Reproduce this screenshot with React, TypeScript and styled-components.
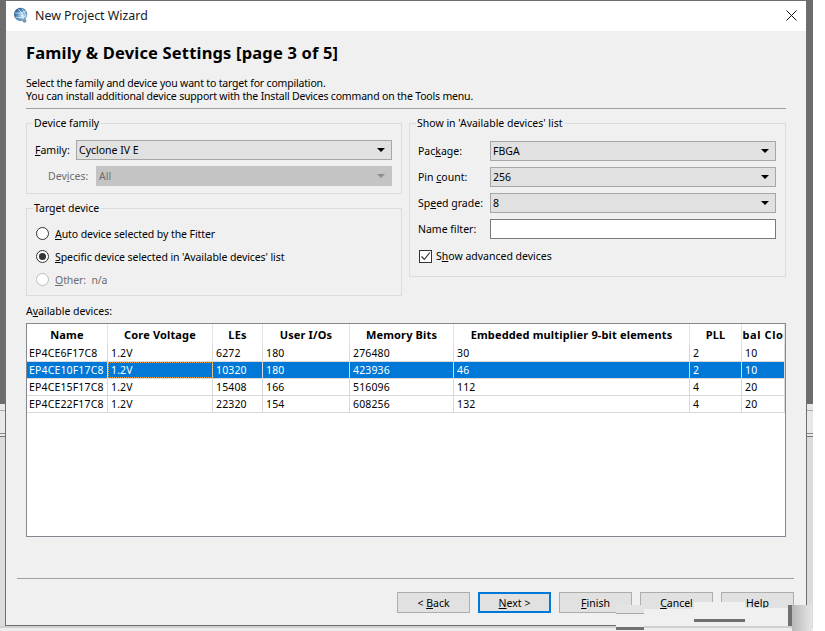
import { FC, ReactNode } from "react";
import styled, { createGlobalStyle } from "styled-components";

const UI_FONT = `"Noto Sans", "Open Sans", sans-serif`;

const GlobalStyle = createGlobalStyle`
  html, body {
    margin: 0;
    padding: 0;
    background: #fff;
  }
  body {
    font-family: ${UI_FONT};
    font-size: 11px;
    color: #000;
  }
`;

const Page = styled.div`
  position: relative;
  width: 825px;
  height: 631px;
  overflow: hidden;
  background: #fff;
`;

/* what is left of the windows behind the dialog, plus its drop shadow */
const Backdrop = styled.div`
  width: 813px;
  height: 631px;
  padding-left: 5px;
  box-sizing: border-box;
  background: linear-gradient(
    to bottom,
    #6c6c6c 0 404px,
    #e8e8e8 404px 410px,
    #a8a8a8 410px 411px,
    #e8e8e8 411px 433px,
    #8a8a8a 433px 434px,
    #e8e8e8 434px 436px,
    #777 436px 437px,
    #dcdcdc 437px 626px,
    #d0d0d0 626px 628px,
    #ededed 628px 631px
  );
`;

const Window = styled.div`
  display: flex;
  flex-direction: column;
  width: 802px;
  height: 626px;
  box-sizing: border-box;
  border: 1px solid #6f6f6f;
  background: #f0f0f0;
`;

const TitleBar = styled.div`
  display: flex;
  align-items: center;
  height: 30px;
  box-sizing: border-box;
  flex: none;
  background: #fff;
  padding: 0 9px 2px 7px;
`;

const TitleText = styled.span`
  flex: 1;
  margin-left: 6px;
  font-size: 12.4px;
  color: #1a1a1a;
`;

const Body = styled.div`
  flex: 1;
  display: flex;
  flex-direction: column;
  padding: 0 20px;
`;

const Heading = styled.h1`
  margin: 11px 0 0;
  height: 21px;
  line-height: 21px;
  font-size: 16.5px;
  letter-spacing: 0.17px;
  font-weight: 700;
`;

const Intro = styled.p`
  margin: 14px 0 0;
  line-height: 13px;
  font-size: 10.5px;
  letter-spacing: -0.18px;
`;

const Rule = styled.div`
  height: 1px;
  background: #a0a0a0;
`;

const IntroRule = styled(Rule)`
  margin-top: 5px;
`;

const Groups = styled.div`
  display: grid;
  grid-template-columns: 376px 377px;
  column-gap: 7px;
  align-items: start;
  margin-top: 14px;
`;

const Column = styled.div`
  display: flex;
  flex-direction: column;
  gap: 14px;
`;

const GroupBox = styled.section<{ $height: number; $pad: number }>`
  position: relative;
  box-sizing: border-box;
  height: ${(p) => p.$height}px;
  border: 1px solid #dcdcdc;
  padding: ${(p) => p.$pad}px 9px 0 8px;
  display: flex;
  flex-direction: column;
`;

const Legend = styled.span`
  position: absolute;
  top: -8px;
  left: 6px;
  padding: 0 1px;
  line-height: 14px;
  font-size: 10.5px;
  background: #f0f0f0;
`;

const FieldRow = styled.div<{ $labelWidth: number }>`
  display: grid;
  grid-template-columns: ${(p) => p.$labelWidth}px 1fr;
  align-items: center;
  height: 20px;
  margin-bottom: 6px;
`;

const FieldLabel = styled.span<{ $disabled?: boolean; $indent?: number }>`
  font-size: 10.5px;
  padding-left: ${(p) => p.$indent ?? 0}px;
  color: ${(p) => (p.$disabled ? "#6d6d6d" : "#000")};
`;

const ComboBox = styled.div<{ $disabled?: boolean }>`
  display: flex;
  align-items: center;
  justify-content: space-between;
  height: 20px;
  box-sizing: border-box;
  padding: 0 5px 0 2px;
  font-size: 10.5px;
  border: 1px solid ${(p) => (p.$disabled ? "#c4c4c4" : "#a6a6a6")};
  background: ${(p) => (p.$disabled ? "#c4c4c4" : "#e1e1e1")};
  color: ${(p) => (p.$disabled ? "#6d6d6d" : "#000")};
`;

const Arrow = styled.span<{ $disabled?: boolean }>`
  width: 0;
  height: 0;
  margin-right: 1px;
  border-left: 4px solid transparent;
  border-right: 4px solid transparent;
  border-top: 4px solid ${(p) => (p.$disabled ? "#8d8d8d" : "#000")};
`;

const TextBox = styled.div`
  height: 20px;
  box-sizing: border-box;
  border: 1px solid #7a7a7a;
  background: #fff;
`;

const RadioRow = styled.div<{ $disabled?: boolean }>`
  display: flex;
  align-items: center;
  gap: 6px;
  height: 13px;
  margin-bottom: 10px;
  margin-left: 1px;
  font-size: 10.5px;
  letter-spacing: -0.08px;
  color: ${(p) => (p.$disabled ? "#6d6d6d" : "#000")};
`;

const RadioDot = styled.span<{ $checked?: boolean; $disabled?: boolean }>`
  display: flex;
  align-items: center;
  justify-content: center;
  width: 13px;
  height: 13px;
  box-sizing: border-box;
  border-radius: 50%;
  border: 1px solid ${(p) => (p.$disabled ? "#bcbcbc" : "#333")};
  background: #fff;

  &::after {
    content: "";
    display: ${(p) => (p.$checked ? "block" : "none")};
    width: 7px;
    height: 7px;
    border-radius: 50%;
    background: #333;
  }
`;

const CheckRow = styled.div`
  display: flex;
  align-items: center;
  gap: 4px;
  margin-top: 4px;
  margin-left: 1px;
  font-size: 10.5px;
`;

const CheckSquare = styled.span`
  display: flex;
  width: 13px;
  height: 13px;
  box-sizing: border-box;
  border: 1px solid #333;
  background: #fff;
`;

const SectionLabel = styled.div`
  margin-top: 8px;
  height: 19px;
  line-height: 14px;
  font-size: 10.5px;
`;

const DeviceTable = styled.div`
  height: 214px;
  box-sizing: border-box;
  border: 1px solid #828790;
  background: #fff;
  overflow: hidden;
`;

const COLUMNS = "81px 105px 50px 87px 104px 236px 52px 43px";

const HeaderRow = styled.div`
  display: grid;
  grid-template-columns: ${COLUMNS};
  height: 21px;
`;

const HeaderCell = styled.div`
  display: flex;
  align-items: center;
  justify-content: center;
  overflow: hidden;
  white-space: nowrap;
  font-size: 11px;
  letter-spacing: 0.15px;
  font-weight: 700;
  border-right: 1px solid #e4e4e4;

  &:last-child {
    letter-spacing: 0.6px;
  }
`;

const DataRow = styled.div<{ $selected?: boolean }>`
  display: grid;
  grid-template-columns: ${COLUMNS};
  height: 17px;
  box-sizing: border-box;
  border-bottom: 1px solid #d9d9d9;
  background: ${(p) => (p.$selected ? "#0078d7" : "#fff")};
  color: ${(p) => (p.$selected ? "#fff" : "#000")};
`;

const DataCell = styled.div<{ $focused?: boolean }>`
  box-sizing: border-box;
  padding-left: 3px;
  line-height: 16px;
  font-size: 10.5px;
  letter-spacing: 0.15px;
  white-space: nowrap;
  overflow: hidden;
  border-right: 1px solid #d9d9d9;
  outline: ${(p) => (p.$focused ? "1px dotted #f5a13a" : "none")};
  outline-offset: -1px;

  &:first-child {
    padding-left: 2px;
  }
`;

const Footer = styled.div`
  flex: none;
  padding: 40px 12px 0 11px;
  height: 87px;
  box-sizing: border-box;
`;

const ButtonBar = styled.div`
  display: flex;
  justify-content: flex-end;
  gap: 8px;
  margin-top: 13px;
`;

const Button = styled.div<{ $primary?: boolean }>`
  display: flex;
  align-items: center;
  justify-content: center;
  width: 73px;
  height: 21px;
  box-sizing: border-box;
  font-size: 10.5px;
  background: #e1e1e1;
  border: ${(p) => (p.$primary ? "2px solid #0078d7" : "1px solid #adadad")};
`;

/* torn patches of the capture along the bottom edge */
const Smudge = styled.div<{
  $left: number;
  $top: number;
  $width: number;
  $height: number;
  $fill?: string;
}>`
  position: absolute;
  left: ${(p) => p.$left}px;
  top: ${(p) => p.$top}px;
  width: ${(p) => p.$width}px;
  height: ${(p) => p.$height}px;
  background: ${(p) => p.$fill ?? "#f0f0f0"};
`;

const GlobeIcon: FC = () => (
  <svg width="16" height="17" viewBox="0 0 16 17">
    <defs>
      <radialGradient id="globe" cx="0.62" cy="0.6" r="0.7">
        <stop offset="0" stopColor="#dcecf6" />
        <stop offset="0.5" stopColor="#5d97c6" />
        <stop offset="1" stopColor="#1f4f86" />
      </radialGradient>
    </defs>
    <circle cx="7.6" cy="7.4" r="6.6" fill="url(#globe)" />
    <path
      d="M5 2c3 2 5 6 5.5 10M9 1.5c2 2 3.500 5 4 8M2 6c3 .5 7 0 11-2M2.500 10c3 1 7 1 10.500-1"
      stroke="#fff"
      strokeWidth="0.8"
      fill="none"
      opacity="0.75"
    />
    <circle cx="11.500" cy="13.800" r="2" fill="#7b98ad" />
  </svg>
);

const CloseIcon: FC = () => (
  <svg width="11" height="11" viewBox="0 0 11 11">
    <path d="M.5.5l10 10M10.500.5l-10 10" stroke="#111" strokeWidth="1" fill="none" />
  </svg>
);

const CheckMark: FC = () => (
  <svg width="11" height="11" viewBox="0 0 11 11">
    <path d="M1.500 5.500l2.800 3L9.800 1.500" stroke="#333" strokeWidth="1.100" fill="none" />
  </svg>
);

const Combo: FC<{ value: string; disabled?: boolean }> = ({ value, disabled }) => (
  <ComboBox $disabled={disabled}>
    {value}
    <Arrow $disabled={disabled} />
  </ComboBox>
);

const Radio: FC<{ checked?: boolean; disabled?: boolean; children: ReactNode }> = ({
  checked,
  disabled,
  children,
}) => (
  <RadioRow $disabled={disabled}>
    <RadioDot $checked={checked} $disabled={disabled} />
    <span>{children}</span>
  </RadioRow>
);

const headers = [
  "Name",
  "Core Voltage",
  "LEs",
  "User I/Os",
  "Memory Bits",
  "Embedded multiplier 9-bit elements",
  "PLL",
  "Global Clocks",
];

const devices = [
  ["EP4CE6F17C8", "1.2V", "6272", "180", "276480", "30", "2", "10"],
  ["EP4CE10F17C8", "1.2V", "10320", "180", "423936", "46", "2", "10"],
  ["EP4CE15F17C8", "1.2V", "15408", "166", "516096", "112", "4", "20"],
  ["EP4CE22F17C8", "1.2V", "22320", "154", "608256", "132", "4", "20"],
];

const App: FC = () => (
  <>
    <GlobalStyle />
    <Page>
      <Backdrop>
        <Window>
          <TitleBar>
            <GlobeIcon />
            <TitleText>New Project Wizard</TitleText>
            <CloseIcon />
          </TitleBar>
          <Body>
            <Heading>Family &amp; Device Settings [page 3 of 5]</Heading>
            <Intro>
              Select the family and device you want to target for compilation.
              <br />
              You can install additional device support with the Install Devices command on the
              Tools menu.
            </Intro>
            <IntroRule />
            <Groups>
              <Column>
                <GroupBox $height={71} $pad={16}>
                  <Legend>Device family</Legend>
                  <FieldRow $labelWidth={41}>
                    <FieldLabel>
                      <u>F</u>amily:
                    </FieldLabel>
                    <Combo value="Cyclone IV E" />
                  </FieldRow>
                  <FieldRow $labelWidth={61}>
                    <FieldLabel $disabled $indent={13}>
                      Dev<u>i</u>ces:
                    </FieldLabel>
                    <Combo value="All" disabled />
                  </FieldRow>
                </GroupBox>
                <GroupBox $height={88} $pad={18}>
                  <Legend>Target device</Legend>
                  <Radio>
                    <u>A</u>uto device selected by the Fitter
                  </Radio>
                  <Radio checked>
                    <u>S</u>pecific device selected in 'Available devices' list
                  </Radio>
                  <Radio disabled>
                    <u>O</u>ther:&nbsp; n/a
                  </Radio>
                </GroupBox>
              </Column>
              <GroupBox $height={154} $pad={17}>
                <Legend>Show in 'Available devices' list</Legend>
                <FieldRow $labelWidth={72}>
                  <FieldLabel>
                    Pac<u>k</u>age:
                  </FieldLabel>
                  <Combo value="FBGA" />
                </FieldRow>
                <FieldRow $labelWidth={72}>
                  <FieldLabel>
                    Pin <u>c</u>ount:
                  </FieldLabel>
                  <Combo value="256" />
                </FieldRow>
                <FieldRow $labelWidth={72}>
                  <FieldLabel>
                    Sp<u>e</u>ed grade:
                  </FieldLabel>
                  <Combo value="8" />
                </FieldRow>
                <FieldRow $labelWidth={72}>
                  <FieldLabel>Name filter:</FieldLabel>
                  <TextBox />
                </FieldRow>
                <CheckRow>
                  <CheckSquare>
                    <CheckMark />
                  </CheckSquare>
                  <span>
                    S<u>h</u>ow advanced devices
                  </span>
                </CheckRow>
              </GroupBox>
            </Groups>
            <SectionLabel>
              A<u>v</u>ailable devices:
            </SectionLabel>
            <DeviceTable>
              <HeaderRow>
                {headers.map((h) => (
                  <HeaderCell key={h}>
                    <span>{h}</span>
                  </HeaderCell>
                ))}
              </HeaderRow>
              {devices.map((row, r) => (
                <DataRow key={row[0]} $selected={r === 1}>
                  {row.map((cell, c) => (
                    <DataCell key={c} $focused={r === 1 && c === 1}>
                      {cell}
                    </DataCell>
                  ))}
                </DataRow>
              ))}
            </DeviceTable>
          </Body>
          <Footer>
            <Rule />
            <ButtonBar>
              <Button>
                &lt;&nbsp;<u>B</u>ack
              </Button>
              <Button $primary>
                <u>N</u>ext &gt;
              </Button>
              <Button>
                <u>F</u>inish
              </Button>
              <Button>
                <u>C</u>ancel
              </Button>
              <Button>
                <u>H</u>elp
              </Button>
            </ButtonBar>
          </Footer>
        </Window>
      </Backdrop>
      <Smudge $left={616} $top={605} $width={28} $height={8} $fill="#e4e4e4" />
      <Smudge $left={616} $top={613} $width={28} $height={14} />
      <Smudge $left={616} $top={613} $width={28} $height={1} $fill="#a8a8a8" />
      <Smudge $left={616} $top={627} $width={28} $height={3} $fill="#707070" />
      <Smudge $left={644} $top={609} $width={50} $height={17} />
      <Smudge $left={694} $top={602} $width={51} $height={17} />
      <Smudge $left={694} $top={619} $width={51} $height={3} $fill="#707070" />
      <Smudge $left={694} $top={622} $width={51} $height={4} />
      <Smudge $left={745} $top={608} $width={43} $height={18} />
      <Smudge $left={788} $top={605} $width={4} $height={21} $fill="#707070" />
      <Smudge
        $left={792}
        $top={605}
        $width={20}
        $height={26}
        $fill="linear-gradient(to right, #b8b8b8, #e6e6e6)"
      />
    </Page>
  </>
);

export default App;
